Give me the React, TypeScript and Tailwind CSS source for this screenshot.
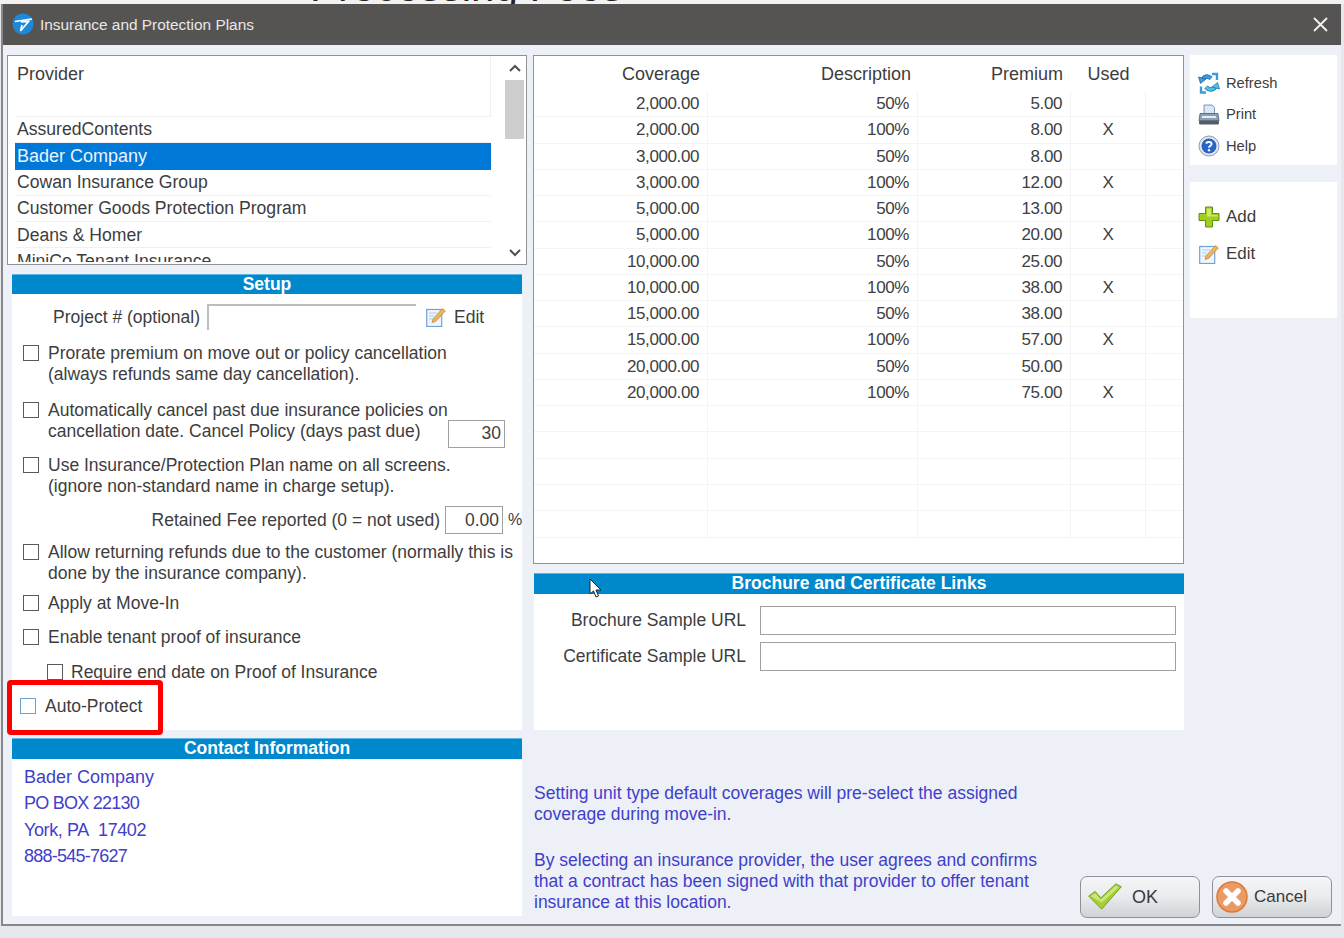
const rows = [
  ['2,000.00', '50%', '5.00', ''],
  ['2,000.00', '100%', '8.00', 'X'],
  ['3,000.00', '50%', '8.00', ''],
  ['3,000.00', '100%', '12.00', 'X'],
  ['5,000.00', '50%', '13.00', ''],
  ['5,000.00', '100%', '20.00', 'X'],
  ['10,000.00', '50%', '25.00', ''],
  ['10,000.00', '100%', '38.00', 'X'],
  ['15,000.00', '50%', '38.00', ''],
  ['15,000.00', '100%', '57.00', 'X'],
  ['20,000.00', '50%', '50.00', ''],
  ['20,000.00', '100%', '75.00', 'X'],
  ['', '', '', ''],
  ['', '', '', ''],
  ['', '', '', ''],
  ['', '', '', ''],
  ['', '', '', ''],
];

const providers = ['AssuredContents', 'Bader Company', 'Cowan Insurance Group', 'Customer Goods Protection Program', 'Deans & Homer', 'MiniCo Tenant Insurance'];

function LogoIcon() {
  return (
    <svg width="22" height="22" viewBox="0 0 22 22">
      <circle cx="11" cy="11" r="10.5" fill="#1e88d8" />
      <path d="M3 8.5 L20 6 M9 9 L16.5 8.5 L8.5 18 L10 12" fill="none" stroke="#fff" strokeWidth="1.7" />
    </svg>
  );
}

function RefreshIcon() {
  return (
    <svg width="22" height="22" viewBox="0 0 22 22">
      <path d="M13 6.5 C10 3.5 7 4 5 7" fill="none" stroke="#1c6aa8" strokeWidth="4.5" />
      <path d="M13 6.5 C10 3.5 7 4 5 7" fill="none" stroke="#3d9bdc" strokeWidth="3" />
      <path d="M0.5 5 L8 7 L2.5 11.5 Z" fill="#3d9bdc" stroke="#1c6aa8" strokeWidth="0.8" />
      <path d="M8 15 C11 18.5 15 18 17 15" fill="none" stroke="#1c7fb0" strokeWidth="4.5" />
      <path d="M8 15 C11 18.5 15 18 17 15" fill="none" stroke="#4fc0e8" strokeWidth="3" />
      <path d="M21.5 17 L14 15 L19.5 10.5 Z" fill="#4fc0e8" stroke="#1c7fb0" strokeWidth="0.8" />
      <path d="M14 2 H19 V8" fill="none" stroke="#3d9bdc" strokeWidth="2.4" />
      <path d="M8 20.5 H3 V14.5" fill="none" stroke="#3d9bdc" strokeWidth="2.4" />
    </svg>
  );
}

function PrintIcon() {
  return (
    <svg width="22" height="22" viewBox="0 0 22 22">
      <path d="M6 1 H14 L16.5 3.5 V10 H6 Z" fill="#dbe8f5" stroke="#5b7fa8" strokeWidth="0.8" />
      <path d="M2 9.5 H20 L21 17 H1 Z" fill="#8d9fb5" stroke="#4f5f73" strokeWidth="0.8" />
      <rect x="1" y="16.5" width="20" height="4" rx="1.5" fill="#545c66" />
      <rect x="4" y="12" width="14" height="2" fill="#e4ecf4" />
    </svg>
  );
}

function HelpIcon() {
  return (
    <svg width="22" height="22" viewBox="0 0 22 22">
      <circle cx="11" cy="11" r="10" fill="#dfe6f0" stroke="#8d9db3" strokeWidth="1" />
      <circle cx="11" cy="11" r="7.5" fill="#2a63c4" />
      <path d="M8.3 8.6 C8.5 6.6 13.6 6.3 13.6 9 C13.6 10.8 11 10.8 11 12.8" fill="none" stroke="#fff" strokeWidth="1.9" />
      <circle cx="11" cy="15.2" r="1.2" fill="#fff" />
    </svg>
  );
}

function AddIcon() {
  return (
    <svg width="22" height="22" viewBox="0 0 22 22">
      <path d="M7.5 1 H14.5 V7.5 H21 V14.5 H14.5 V21 H7.5 V14.5 H1 V7.5 H7.5 Z" fill="#9fce1e" stroke="#5f8f14" strokeWidth="1" strokeLinejoin="round" />
      <path d="M9 2.5 H13 V9 H19.5 V10.5 H9 Z" fill="#cbe86a" />
    </svg>
  );
}

function EditIcon() {
  return (
    <svg width="20" height="20" viewBox="0 0 20 20">
      <rect x="0.7" y="2.5" width="15" height="17" fill="#eef5fc" stroke="#6fa3d6" strokeWidth="1.2" />
      <path d="M3 6 H11 M3 9 H8 M3 12 H7" stroke="#b8cbe0" strokeWidth="1" />
      <path d="M6 15.5 L7 12 L16.5 1.5 L19.3 4 L9.5 14.5 Z" fill="#e8b660" stroke="#b98032" strokeWidth="0.7" />
    </svg>
  );
}

function CheckIcon() {
  return (
    <svg width="36" height="28" viewBox="0 0 37 30">
      <path d="M1 14 L8 9 L14 16 L30 1 L36 4 L15 28 Z" fill="#a5cf33" stroke="#6f9a2a" strokeWidth="1" strokeLinejoin="round" />
      <path d="M3 14 L8 11 L14 18 L30 3 L33 4.5 L15 21 Z" fill="#cde77d" />
    </svg>
  );
}

function CancelIcon() {
  return (
    <svg width="32" height="32" viewBox="0 0 32 32">
      <circle cx="16" cy="16" r="15" fill="#ec9a63" stroke="#d97a3a" strokeWidth="1.5" />
      <path d="M10 10 L22 22 M22 10 L10 22" stroke="#fff" strokeWidth="5.5" strokeLinecap="round" />
    </svg>
  );
}

function CheckBox({ className = 'border-[#5a5a5a]' }: { className?: string }) {
  return <span className={`mt-[2px] block h-[16px] w-[16px] shrink-0 border-[1.5px] bg-white ${className}`} />;
}

function SectionBar({ title, className = 'h-[20px]' }: { title: string; className?: string }) {
  return (
    <div className={`flex items-center justify-center border-t border-[#5fb7e6] bg-[#0088cc] pb-[1px] text-[17.5px] font-bold text-white ${className}`}>
      {title}
    </div>
  );
}

function ToolItem({ icon, label, className }: { icon: React.ReactNode; label: string; className: string }) {
  return (
    <div className={`flex items-center gap-[6px] pl-[8px] ${className}`}>
      <span className="flex w-[22px] justify-center">{icon}</span>
      <span>{label}</span>
    </div>
  );
}

function DialogButton({ icon, label, className }: { icon: React.ReactNode; label: string; className: string }) {
  return (
    <button className={`flex h-[42px] w-[120px] items-center rounded-[7px] border border-[#8e9196] bg-gradient-to-b from-[#f4f5f7] via-[#e9ebee] to-[#cfd2d6] text-[#3a3a3a] ${className}`}>
      {icon}
      <span>{label}</span>
    </button>
  );
}

export default function App() {
  return (
    <div className="relative h-[938px] w-[1344px] overflow-hidden bg-[#e6e8ec] font-['Liberation_Sans',Arial,sans-serif] text-[17.5px] text-[#3d3d3d]">
      <div className="h-[4px] overflow-hidden bg-[#f2f2f2] pl-[310px]">
        <div className="-mt-[32px] text-[42px] leading-[38px] text-[#222]">Processing Fees</div>
      </div>

      <div className="ml-[1px] h-[922px] w-[1340px] border-b-2 border-l-2 border-[#85878b] bg-[#edf0f6]">
        <div className="flex h-[41px] items-center justify-between bg-[#555453] pl-[9px] pr-[13px] text-[#e8e8e8]">
          <div className="flex items-center gap-[6px] text-[15.4px]">
            <LogoIcon />
            <span>Insurance and Protection Plans</span>
          </div>
          <svg width="15" height="15" viewBox="0 0 15 15">
            <path d="M1 1 L14 14 M14 1 L1 14" stroke="#f2f2f2" strokeWidth="1.8" />
          </svg>
        </div>

        <div className="flex gap-[6px] pl-[4px] pt-[10px]">
          {/* left column */}
          <div className="w-[520px]">
            <div className="flex h-[210px] border border-[#8f9297] bg-white">
              <div className="h-[206px] w-[484px] overflow-hidden pl-[7px] text-[17.6px]">
                <div className="flex h-[61px] border-b border-[#f0f0f0]">
                  <div className="w-[476px] border-r border-[#f0f0f0] pl-[2px] pt-[8px] text-[18px] leading-[21px]">Provider</div>
                </div>
                {providers.map((p) => (
                  <div
                    key={p}
                    className={
                      p === 'Bader Company'
                        ? 'flex h-[26.3px] w-[476px] items-center bg-[#0078d7] pl-[2px] text-[18px] text-[#eaf4ff]'
                        : 'flex h-[26.3px] w-[476px] items-center border-b border-[#f0f0f0] pl-[2px]'
                    }
                  >
                    {p}
                  </div>
                ))}
              </div>
              <div className="ml-[12px] flex w-[21px] flex-col items-center pb-[7px] pt-[8px]">
                <svg width="12" height="8" viewBox="0 0 12 8"><path d="M1 7 L6 2 L11 7" fill="none" stroke="#505050" strokeWidth="2" /></svg>
                <div className="mt-[8px] h-[59px] w-[19px] bg-[#cdcdcd]" />
                <svg className="mt-auto" width="12" height="8" viewBox="0 0 12 8"><path d="M1 1 L6 6 L11 1" fill="none" stroke="#505050" strokeWidth="2" /></svg>
              </div>
            </div>

            <div className="mx-[5px] mt-[9px] h-[456px] bg-white">
              <SectionBar title="Setup" />
              <div className="mt-[10px] flex h-[26px] items-center">
                <span className="w-[188px] text-right">Project # (optional)</span>
                <span className="ml-[7px] h-[26px] w-[209px] border-l-2 border-t-2 border-[#bdbdbd]" />
                <span className="ml-[10px] flex w-[20px] justify-center"><EditIcon /></span>
                <span className="ml-[8px]">Edit</span>
              </div>

              <div className="mt-[13px] flex gap-[9px] pl-[11px] leading-[21px]">
                <CheckBox />
                <div>
                  Prorate premium on move out or policy cancellation
                  <br />
                  (always refunds same day cancellation).
                </div>
              </div>

              <div className="mt-[15px] flex gap-[9px] pl-[11px] leading-[21px]">
                <CheckBox />
                <div className="whitespace-nowrap">
                  <div>Automatically cancel past due insurance policies on</div>
                  <div className="flex h-[21px] items-center">
                    <span className="w-[400px]">cancellation date. Cancel Policy (days past due)</span>
                    <span className="mt-[4px] flex h-[28px] w-[57px] shrink-0 items-center justify-end border border-[#a0a0a0] pr-[3px]">30</span>
                  </div>
                </div>
              </div>

              <div className="mt-[13px] flex gap-[9px] pl-[11px] leading-[21px]">
                <CheckBox />
                <div>
                  Use Insurance/Protection Plan name on all screens.
                  <br />
                  (ignore non-standard name in charge setup).
                </div>
              </div>

              <div className="mt-[9px] flex h-[28px] items-center justify-end">
                <span>Retained Fee reported (0 = not used)</span>
                <span className="ml-[5px] flex h-[28px] w-[58px] items-center justify-end border border-[#a0a0a0] pr-[3px]">0.00</span>
                <span className="ml-[5px] w-[14px] overflow-visible text-[16px]">%</span>
              </div>

              <div className="mt-[8px] flex gap-[9px] pl-[11px] leading-[21px]">
                <CheckBox />
                <div className="whitespace-nowrap">
                  Allow returning refunds due to the customer (normally this is
                  <br />
                  done by the insurance company).
                </div>
              </div>

              <div className="mt-[9px] flex gap-[9px] pl-[11px] leading-[21px]">
                <CheckBox />
                <div>Apply at Move-In</div>
              </div>

              <div className="mt-[13px] flex gap-[9px] pl-[11px] leading-[21px]">
                <CheckBox />
                <div>Enable tenant proof of insurance</div>
              </div>

              <div className="mt-[14px] flex gap-[8px] pl-[35px] leading-[21px]">
                <CheckBox />
                <div>Require end date on Proof of Insurance</div>
              </div>

              <div className="mt-[13px] flex gap-[9px] pl-[8px] leading-[21px]">
                <CheckBox className="border-[#6ea3d0]" />
                <div>Auto-Protect</div>
              </div>
            </div>

            <div className="mx-[5px] mt-[8px] h-[178px] bg-white">
              <SectionBar title="Contact Information" className="h-[21px]" />
              <div className="pl-[12px] pt-[5px] text-[18px] leading-[26.3px] text-[#3f3fcb]">
                <div>Bader Company</div>
                <div className="tracking-[-0.75px]">PO BOX 22130</div>
                <div className="tracking-[-0.4px]">York, PA&nbsp; 17402</div>
                <div className="tracking-[-0.75px]">888-545-7627</div>
              </div>
            </div>
          </div>

          {/* center and right */}
          <div className="w-[804px]">
            <div className="flex gap-[6px]">
              <div className="w-[651px]">
                <div className="h-[509px] overflow-hidden border border-[#8f9297] bg-white">
                  <div className="grid h-[35px] grid-cols-[174px_210px_153px_75px_1fr] items-start pt-[8px] text-[18px] leading-[21px]">
                    <div className="pr-[8px] text-right">Coverage</div>
                    <div className="pr-[7px] text-right">Description</div>
                    <div className="pr-[8px] text-right">Premium</div>
                    <div className="text-center">Used</div>
                    <div />
                  </div>
                  {rows.map((r, i) => (
                    <div key={i} className="grid h-[26.27px] grid-cols-[174px_210px_153px_75px_1fr] items-center border-b border-[#f4f4f4] text-[17px] tracking-[-0.4px] text-[#404040]">
                      <div className="flex h-full items-center justify-end border-r border-[#f4f4f4] pr-[8px]">{r[0]}</div>
                      <div className="flex h-full items-center justify-end border-r border-[#f4f4f4] pr-[8px]">{r[1]}</div>
                      <div className="flex h-full items-center justify-end border-r border-[#f4f4f4] pr-[8px]">{r[2]}</div>
                      <div className="flex h-full items-center justify-center border-r border-[#f4f4f4]">{r[3]}</div>
                      <div />
                    </div>
                  ))}
                </div>

                <div className="ml-[1px] mt-[9px] h-[157px] w-[650px] bg-white">
                  <SectionBar title="Brochure and Certificate Links" className="h-[21px]" />
                  <div className="mt-[12px] flex h-[29px] items-center">
                    <span className="w-[212px] text-right">Brochure Sample URL</span>
                    <span className="ml-[14px] h-[29px] w-[416px] border border-[#a0a0a0] bg-white" />
                  </div>
                  <div className="mt-[7px] flex h-[29px] items-center">
                    <span className="w-[212px] text-right">Certificate Sample URL</span>
                    <span className="ml-[14px] h-[29px] w-[416px] border border-[#a0a0a0] bg-white" />
                  </div>
                </div>
              </div>

              <div className="w-[147px]">
                <div className="h-[110px] bg-white pt-[12.5px] text-[14.7px] leading-[31.5px]">
                  <ToolItem icon={<RefreshIcon />} label="Refresh" className="h-[31.5px]" />
                  <ToolItem icon={<PrintIcon />} label="Print" className="h-[31.5px]" />
                  <ToolItem icon={<HelpIcon />} label="Help" className="h-[31.5px]" />
                </div>
                <div className="mt-[17px] h-[136px] bg-white pt-[20px] text-[17px]">
                  <ToolItem icon={<AddIcon />} label="Add" className="h-[30px]" />
                  <ToolItem icon={<EditIcon />} label="Edit" className="mt-[7px] h-[30px]" />
                </div>
              </div>
            </div>

            <div className="flex items-start justify-between">
              <div className="ml-[1px] mt-[53px] leading-[21px] text-[#3f3fcb]">
                <div>
                  Setting unit type default coverages will pre-select the assigned
                  <br />
                  coverage during move-in.
                </div>
                <div className="mt-[25px]">
                  By selecting an insurance provider, the user agrees and confirms
                  <br />
                  that a contract has been signed with that provider to offer tenant
                  <br />
                  insurance at this location.
                </div>
              </div>
              <div className="mr-[5px] mt-[146px] flex gap-[12px]">
                <DialogButton icon={<CheckIcon />} label="OK" className="gap-[9px] pl-[6px] text-[18px]" />
                <DialogButton icon={<CancelIcon />} label="Cancel" className="gap-[6px] pl-[3px] text-[17px]" />
              </div>
            </div>
          </div>
        </div>
      </div>

      {/* callout and mouse pointer lying over the dialog */}
      <div className="absolute left-[7px] top-[680px] h-[55px] w-[156px] rounded-[4px] border-[5px] border-[#ff0000]" />
      <svg className="absolute left-[589px] top-[578px]" width="14" height="21" viewBox="0 0 14 21">
        <path d="M1 1 V16 L4.5 13 L7 19 L9.5 18 L7 12 H12 Z" fill="#fff" stroke="#222" strokeWidth="1" />
      </svg>
    </div>
  );
}
